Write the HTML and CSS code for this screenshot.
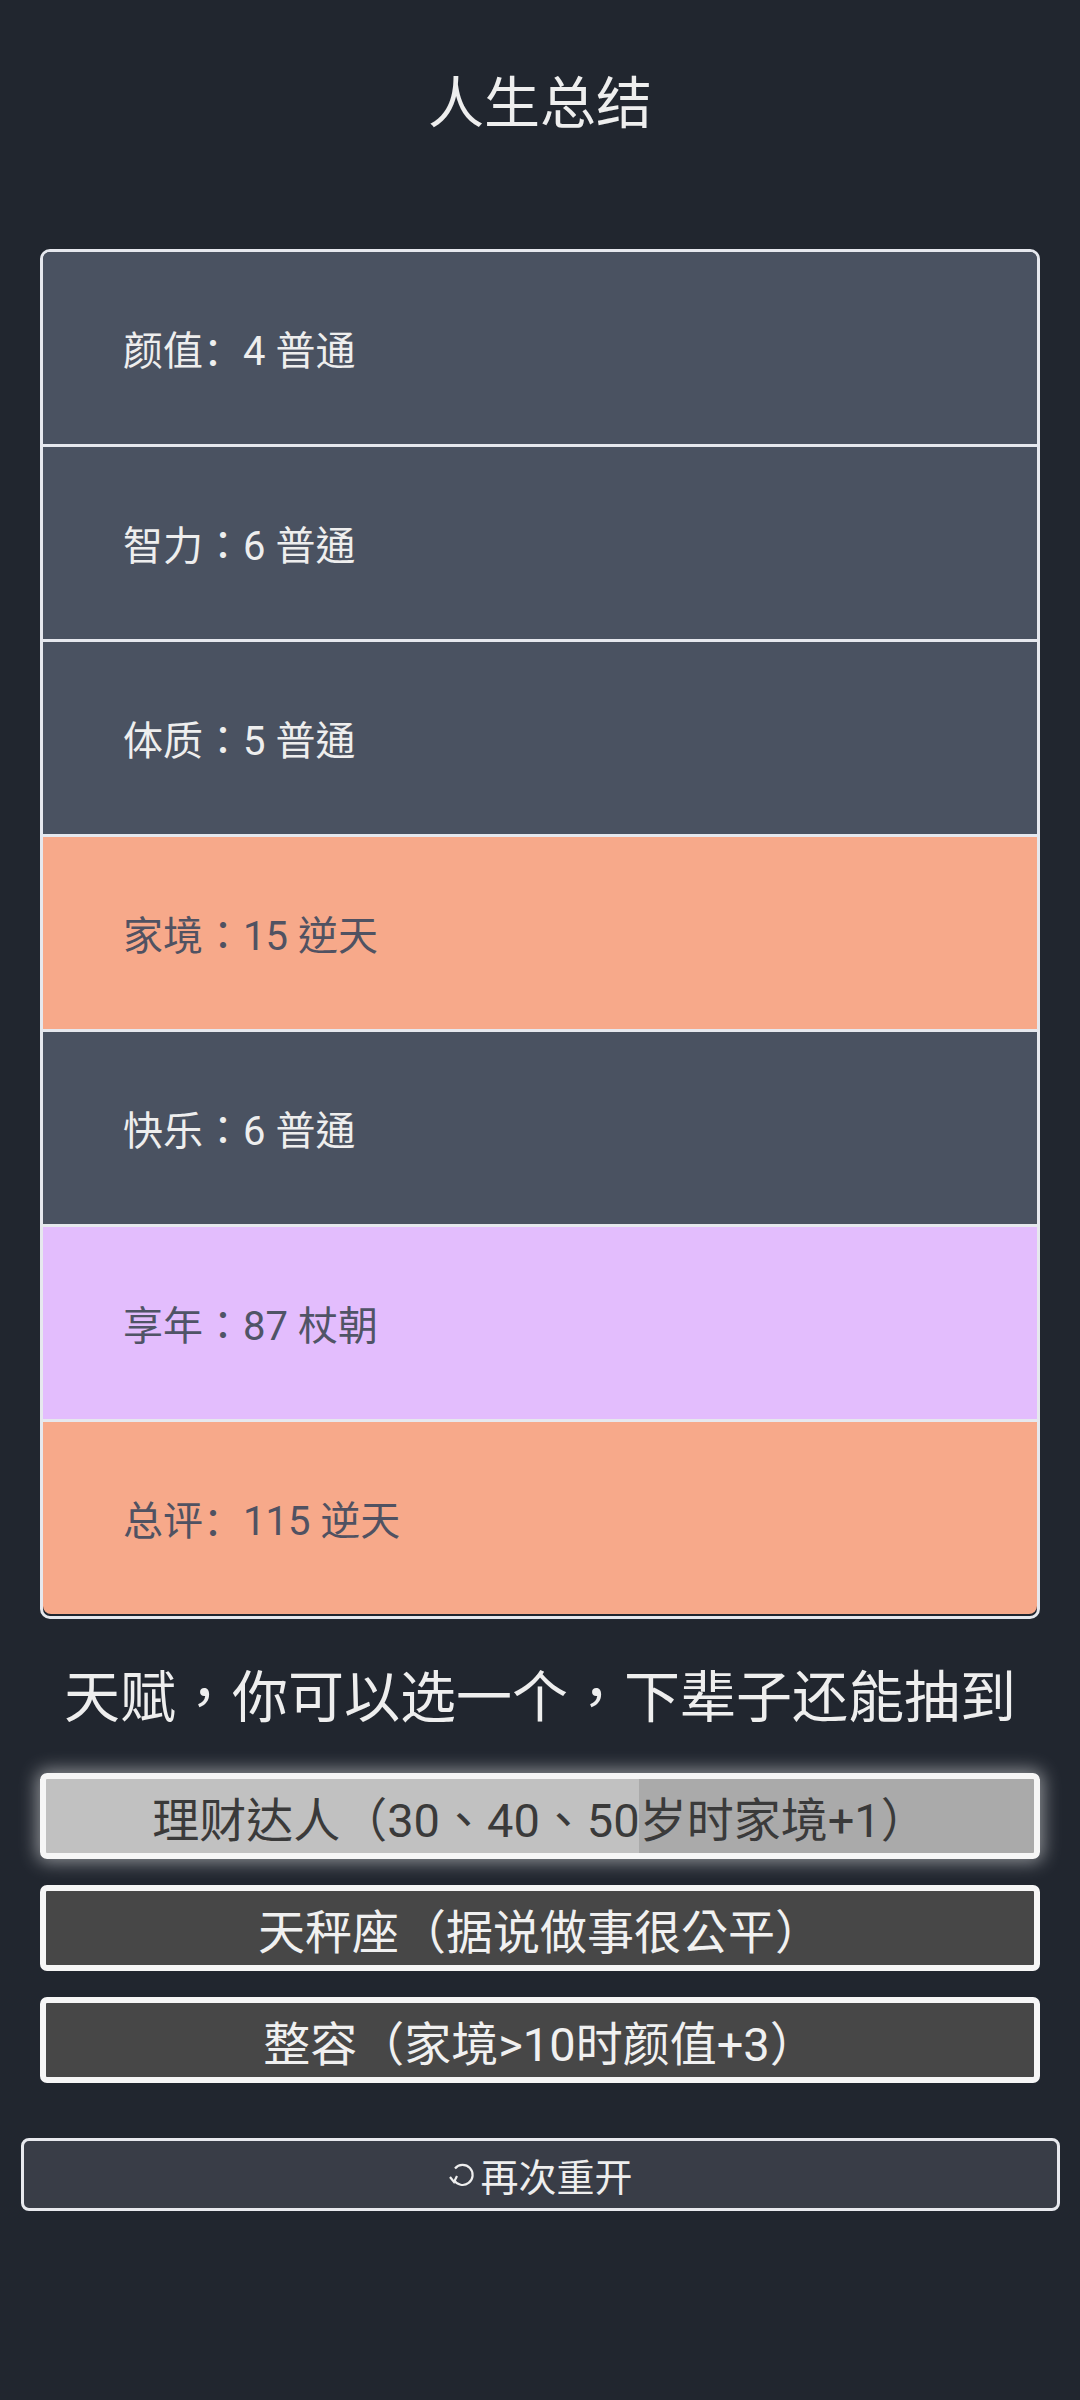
FILE: index.html
```html
<!DOCTYPE html>
<html lang="zh-Hant">
<head>
    <meta charset="utf-8">
    <meta name="viewport" content="width=device-width, initial-scale=1.0">
    <title>人生重开模拟器</title>
    <link rel="stylesheet" href="styles.css">
</head>
<body>
    <div id="summary">
        <h1 class="head">人生总结</h1>
        <ul class="judge">
            <li class="sc" lang="zh-CN">颜值：4 普通</li>
            <li>智力：6 普通</li>
            <li>体质：5 普通</li>
            <li class="grade3b">家境：15 逆天</li>
            <li>快乐：6 普通</li>
            <li class="grade2b">享年：87 杖朝</li>
            <li class="grade3b sc" lang="zh-CN">总评：115 逆天</li>
        </ul>
        <div class="head sub">天赋，你可以选一个，下辈子还能抽到</div>
        <ul class="talents">
            <li class="selected">理财达人（30、40、50岁时家境+1）</li>
            <li>天秤座（据说做事很公平）</li>
            <li>整容（家境&gt;10时颜值+3）</li>
        </ul>
        <button id="again" lang="zh-CN">
            <svg class="icon" viewBox="0 0 28 28" width="28" height="28">
                <path d="M6 19 A10 10 0 1 0 7 7.5" fill="none" stroke="#eeeeee" stroke-width="2.2"/>
                <path d="M2 16 L6 21 L9 15" fill="none" stroke="#eeeeee" stroke-width="2.2"/>
            </svg>再次重开
        </button>
    </div>
</body>
</html>
```
FILE: styles.css
```css
html, body {
    margin: 0;
    padding: 0;
    background-color: #21262f;
    color: #eeeeee;
    font-family: Roboto, "Noto Sans CJK TC", sans-serif;
}

#summary {
    display: flex;
    flex-direction: column;
    padding-top: 65px;
}

.head {
    margin: 0;
    text-align: center;
    font-size: 56px;
    font-weight: normal;
    line-height: 78px;
}

.sub {
    margin-top: 40px;
}

ul {
    list-style: none;
    margin: 0;
    padding: 0;
}

.judge {
    margin: 106px 40px 0;
    border: 3px solid #e6e8ee;
    border-radius: 10px;
    overflow: hidden;
    padding-bottom: 2px;
}

.judge li {
    height: 192px;
    display: flex;
    align-items: center;
    padding-left: 80px;
    font-size: 40px;
    background-color: #4a5261;
    border-bottom: 3px solid #e6e8ee;
}

.judge li:last-child {
    border-bottom: none;
    border-radius: 0 0 8px 8px;
}

.judge li.sc {
    font-family: Roboto, "Noto Sans CJK SC", sans-serif;
}

.judge li.grade2b {
    background-color: #e3bdfd;
    color: #505466;
}

.judge li.grade3b {
    background-color: #f7a98a;
    color: #505262;
}

.talents {
    margin: 36px 40px 0;
    display: flex;
    flex-direction: column;
    gap: 26px;
}

.talents li {
    height: 74px;
    display: flex;
    align-items: center;
    justify-content: center;
    border: 6px solid #f6f6f6;
    border-radius: 7px;
    background-color: #474747;
    color: #f0f0f0;
    font-size: 47px;
}

.talents li.selected {
    background: linear-gradient(to right, #c1c1c1 0, #c1c1c1 593px, #aaaaaa 593px);
    color: #3a3a3a;
    box-shadow: 0 0 18px 3px rgba(255, 255, 255, 0.5);
}

#again {
    margin: 55px 20px 0 21px;
    height: 73px;
    display: flex;
    align-items: center;
    justify-content: center;
    background-color: #393d47;
    color: #eeeeee;
    border: 3px solid #e8e9ee;
    border-radius: 8px;
    font-family: Roboto, "Noto Sans CJK SC", sans-serif;
    font-size: 38px;
    padding: 0;
}

#again .icon {
    margin-right: 4px;
}
```
